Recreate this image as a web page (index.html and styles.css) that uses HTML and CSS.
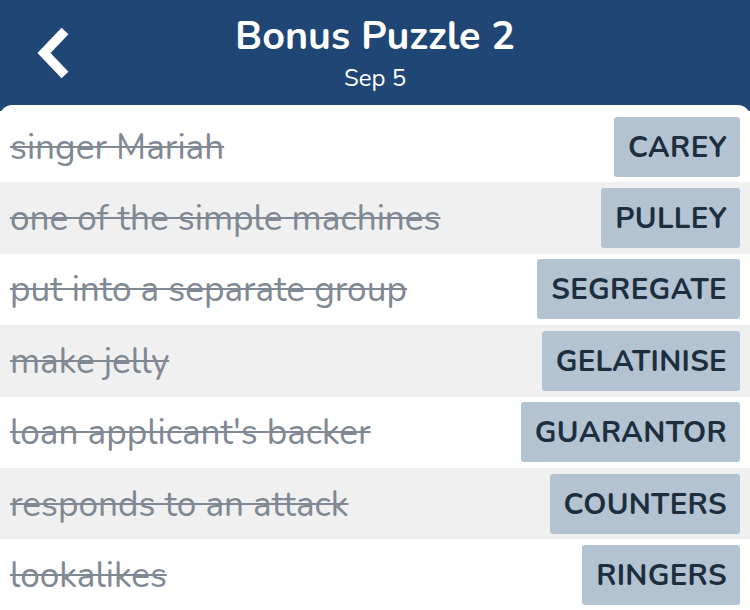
FILE: index.html
```html
<!DOCTYPE html>
<html>
<head>
<meta charset="utf-8">
<link rel="stylesheet" href="styles.css">
</head>
<body>
<div class="app">
  <header class="header">
    <div class="back">
      <svg width="36" height="52" viewBox="0 0 36 52"><polyline points="29,4 8,26 29,48" fill="none" stroke="#fff" stroke-width="9.5" stroke-linejoin="miter" stroke-linecap="butt"/></svg>
    </div>
    <div class="titles">
      <div class="title">Bonus Puzzle 2</div>
      <div class="subtitle">Sep 5</div>
    </div>
  </header>
  <main class="card">
    <div class="row"><span class="clue">singer Mariah</span><span class="answer">CAREY</span></div>
    <div class="row alt"><span class="clue">one of the simple machines</span><span class="answer">PULLEY</span></div>
    <div class="row"><span class="clue">put into a separate group</span><span class="answer">SEGREGATE</span></div>
    <div class="row alt"><span class="clue">make jelly</span><span class="answer">GELATINISE</span></div>
    <div class="row"><span class="clue">loan applicant's backer</span><span class="answer">GUARANTOR</span></div>
    <div class="row alt"><span class="clue">responds to an attack</span><span class="answer">COUNTERS</span></div>
    <div class="row"><span class="clue">lookalikes</span><span class="answer">RINGERS</span></div>
  </main>
</div>
</body>
</html>
```
FILE: styles.css
```css
* { box-sizing: border-box; }
html, body { margin: 0; padding: 0; }
body {
  background: #1f4674;
  font-family: "Nunito", "Lato", "Open Sans", sans-serif;
  width: 750px;
  height: 610px;
  overflow: hidden;
}
.header {
  height: 105px;
  position: relative;
  display: flex;
  justify-content: center;
  background: #1f4674;
  color: #fff;
}
.back {
  position: absolute;
  left: 36px;
  top: 27px;
}
.back svg { display: block; }
.titles {
  display: flex;
  flex-direction: column;
  align-items: center;
  padding-top: 12px;
}
.title {
  font-size: 39.5px;
  font-weight: 700;
  line-height: 48px;
}
.subtitle {
  font-size: 24px;
  line-height: 30px;
  margin-top: 3px;
}
.card {
  background: #fff;
  border-radius: 12px 12px 0 0;
  padding-top: 6px;
  height: 505px;
}
.row {
  height: 71.4px;
  display: flex;
  align-items: center;
  justify-content: space-between;
  padding: 0 10px;
  background: #fff;
}
.row.alt { background: #f0f0f0; }
.clue {
  font-size: 35.2px;
  color: #7f8893;
  text-decoration: line-through;
  text-decoration-thickness: 2px;
  white-space: nowrap;
}
.answer {
  background: #b3c3d1;
  color: #1d2e3f;
  font-weight: 700;
  font-size: 29.5px;
  height: 60px;
  line-height: 60px;
  padding: 0 13px 0 14px;
  border-radius: 3px;
  letter-spacing: 0.3px;
}
```
